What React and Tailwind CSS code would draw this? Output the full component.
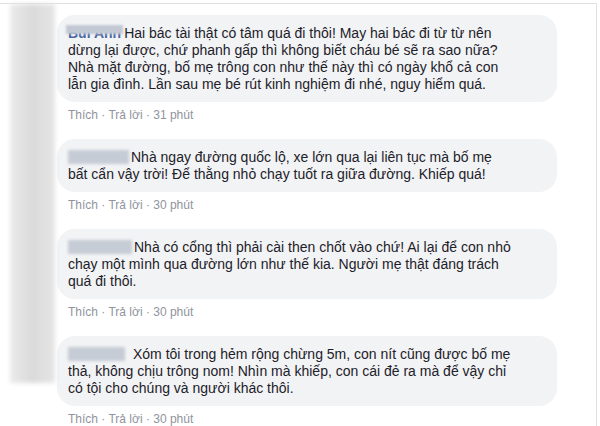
import React from 'react';

const comments = [
  {
    name: 'first',
    lines: [
      'Hai bác tài thật có tâm quá đi thôi! May hai bác đi từ từ nên',
      'dừng lại được, chứ phanh gấp thì không biết cháu bé sẽ ra sao nữa?',
      'Nhà mặt đường, bố mẹ trông con như thế này thì có ngày khổ cả con',
      'lẫn gia đình. Lần sau mẹ bé rút kinh nghiệm đi nhé, nguy hiểm quá.',
    ],
    time: '31 phút',
    blurW: 'w-[60px]',
  },
  {
    lines: [
      'Nhà ngay đường quốc lộ, xe lớn qua lại liên tục mà bố mẹ',
      'bất cẩn vậy trời! Để thằng nhỏ chạy tuốt ra giữa đường. Khiếp quá!',
    ],
    time: '30 phút',
    blurW: 'w-[61px]',
  },
  {
    lines: [
      'Nhà có cổng thì phải cài then chốt vào chứ! Ai lại để con nhỏ',
      'chạy một mình qua đường lớn như thế kia. Người mẹ thật đáng trách',
      'quá đi thôi.',
    ],
    time: '30 phút',
    blurW: 'w-[64px]',
  },
  {
    lines: [
      'Xóm tôi trong hẻm rộng chừng 5m, con nít cũng được bố mẹ',
      'thả, không chịu trông nom! Nhìn mà khiếp, con cái đẻ ra mà để vậy chỉ',
      'có tội cho chúng và người khác thôi.',
    ],
    time: '30 phút',
    blurW: 'w-[57px] mr-[8px]',
  },
];

const Name = ({ c }) => {
  if (c.name === 'first') {
    return (
      <span className="relative inline-block mr-[3px] font-bold text-[#4b67a1]">
        Bùi Anh
        <span className="absolute left-[-2px] right-[-2px] top-[0px] h-[9px] bg-[#c2c9d4] blur-[1px]" />
      </span>
    );
  }
  return (
    <span className={`inline-block h-[14px] align-[-2px] bg-[#c6ccd5] blur-[1.5px] mr-[2px] ${c.blurW}`} />
  );
};

const App = () => {
  return (
    <div className="w-[600px] h-[426px] overflow-hidden bg-white pt-[3px] font-['Liberation_Sans',Arial,sans-serif]">
      <div className="h-[430px] w-[597px] border-t border-r border-[#dfe0e2] flex">
        <div className="ml-[10px] w-[45px] h-[379px] bg-gradient-to-r from-[#ebebeb] via-[#dadada] to-[#e6e6e6] blur-[2px]" />
        <div className="ml-[2px] pt-[11px] flex flex-col">
          {comments.map((c, i) => (
            <div key={i} className={i > 0 ? 'mt-[16px]' : ''}>
              <div className="w-[500px] rounded-[18px] bg-[#f2f3f5] pl-[11px] pr-[10px] pt-[10px] pb-[9px] text-[14px] leading-[17px] text-[#1d2129] whitespace-nowrap">
                {c.lines.map((l, j) => (
                  <div key={j}>
                    {j === 0 && <Name c={c} />}
                    {l}
                  </div>
                ))}
              </div>
              <div className="mt-[5px] pl-[11px] text-[12px] leading-[16px] text-[#90949c]">
                Thích · Trả lời · {c.time}
              </div>
            </div>
          ))}
        </div>
      </div>
    </div>
  );
};

export default App;
